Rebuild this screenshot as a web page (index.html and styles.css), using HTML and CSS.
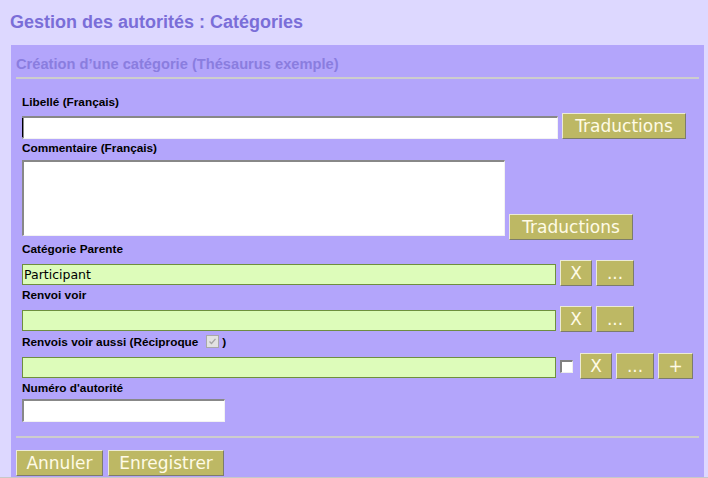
FILE: index.html
```html
<!DOCTYPE html>
<html lang="fr">
<head>
<meta charset="utf-8">
<title>Gestion des autorités : Catégories</title>
<link rel="stylesheet" href="styles.css">
</head>
<body>
<h1 class="page-title">Gestion des autorités : Catégories</h1>
<div class="panel">
  <h2 class="panel-title">Création d’une catégorie (Thésaurus exemple)</h2>
  <div class="rule"></div>
  <div class="form">
    <div class="label">Libellé (Français)</div>
    <div class="row">
      <div class="text text-wide"><span class="caret"></span></div>
      <button class="btn btn-trad">Traductions</button>
    </div>

    <div class="label">Commentaire (Français)</div>
    <div class="row">
      <div class="text area"></div>
      <button class="btn btn-trad">Traductions</button>
    </div>

    <div class="label">Catégorie Parente</div>
    <div class="row">
      <div class="pick">Participant</div>
      <button class="btn btn-x">X</button>
      <button class="btn btn-more">...</button>
    </div>

    <div class="label">Renvoi voir</div>
    <div class="row">
      <div class="pick"></div>
      <button class="btn btn-x">X</button>
      <button class="btn btn-more">...</button>
    </div>

    <div class="label label-check">Renvois voir aussi (Réciproque<span class="check-disabled"><svg width="11" height="11" viewBox="0 0 11 11"><path d="M2.5 5.5 L4.5 7.5 L8.5 2.8" fill="none" stroke="#a4a4a4" stroke-width="1.3"/></svg></span><span class="paren">)</span></div>
    <div class="row">
      <div class="pick"></div>
      <span class="box"></span>
      <button class="btn btn-x">X</button>
      <button class="btn btn-more">...</button>
      <button class="btn btn-add">+</button>
    </div>

    <div class="label">Numéro d'autorité</div>
    <div class="text num"></div>
  </div>
  <div class="rule rule-bottom"></div>
  <div class="actions">
    <button class="btn btn-cancel">Annuler</button>
    <button class="btn btn-save">Enregistrer</button>
  </div>
</div>
<div class="page-foot"></div>
</body>
</html>
```
FILE: styles.css
```css
html, body {
  margin: 0;
  height: 100%;
  overflow: hidden;
}
body {
  background: #ddd8ff;
  font-family: "Liberation Sans", Arial, sans-serif;
}
.page-title {
  margin: 0;
  padding: 11px 10px 12px;
  font-size: 18px;
  line-height: 22px;
  font-weight: bold;
  color: #7a6ed8;
}
.panel {
  margin: 0 4px 0 11px;
  padding: 11px 5px 1px;
  background: #b3a5fb;
}
.panel-title {
  margin: 0;
  font-size: 14.67px;
  line-height: 17px;
  font-weight: bold;
  color: #8a7ddf;
}
.rule {
  height: 2px;
  margin-top: 4px;
  background: #cdcdcd;
}
.rule-bottom {
  margin-top: 14px;
}
.form {
  padding: 17px 0 0 6px;
}
.label {
  font-size: 11.8px;
  font-weight: bold;
  line-height: 13px;
  margin-bottom: 4px;
  color: #000;
}
.label-check {
  line-height: 14px;
}
.check-disabled {
  display: inline-block;
  box-sizing: border-box;
  width: 13px;
  height: 13px;
  margin-left: 8px;
  vertical-align: -2px;
  border: 1px solid #a8a8a8;
  background: #e2e2e2;
}
.check-disabled svg {
  display: block;
}
.paren {
  margin-left: 3px;
}
.row {
  display: flex;
  align-items: flex-end;
  gap: 4px;
  margin-bottom: 3px;
}
.text {
  box-sizing: border-box;
  height: 23px;
  background: #fff;
  border-style: solid;
  border-width: 2px 1px 1px 2px;
  border-color: #888 #f2f2f2 #f2f2f2 #888;
}
.text-wide {
  width: 536px;
  display: flex;
}
.caret {
  width: 1px;
  height: 19px;
  margin-left: -2px;
  background: #000;
}
.area {
  width: 483px;
  height: 76px;
  margin-top: 1px;
  margin-bottom: 4px;
}
.num {
  width: 203px;
}
.pick {
  box-sizing: border-box;
  width: 534px;
  height: 21px;
  margin-bottom: 1px;
  padding-left: 1px;
  background: #ddfcba;
  border: 1px solid #6e8f3e;
  font-family: "DejaVu Sans", sans-serif;
  font-size: 12.5px;
  line-height: 19px;
  color: #000;
}
.box {
  box-sizing: border-box;
  width: 13px;
  height: 13px;
  align-self: center;
  margin-right: 3px;
  background: #fff;
  border-style: solid;
  border-width: 2px 1px 1px 2px;
  border-color: #808080 #eee #eee #808080;
}
.btn {
  box-sizing: border-box;
  height: 26px;
  padding: 0;
  margin: 0;
  border: 1px solid;
  border-color: #ecebd6 #7c7c6c #7c7c6c #ecebd6;
  background: #bdb864;
  color: #fffbe6;
  font-family: "DejaVu Sans", sans-serif;
  font-size: 17px;
  line-height: 24px;
  text-align: center;
}
.btn-trad { width: 124px; }
.btn-x { width: 32px; }
.btn-more { width: 38px; }
.btn-add { width: 35px; }
.btn-cancel { width: 87px; }
.btn-save { width: 116px; }
.actions {
  display: flex;
  gap: 5px;
  margin-top: 12px;
}
.page-foot {
  height: 1px;
  background: #c8c8c8;
}
```
